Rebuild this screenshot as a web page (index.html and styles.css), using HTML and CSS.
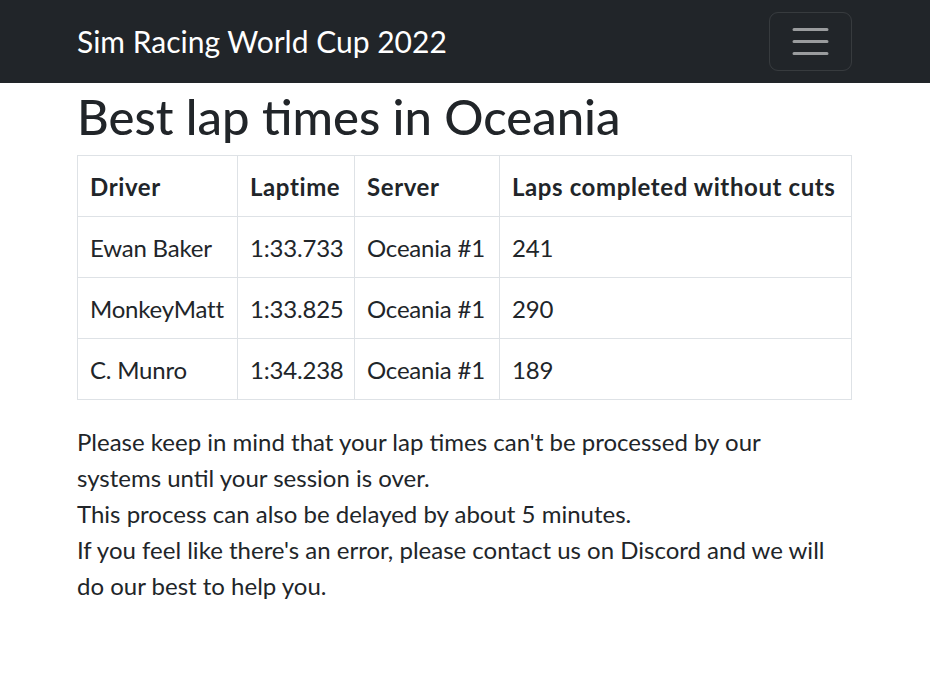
FILE: index.html
```html
<!DOCTYPE html>
<html lang="en">
<head>
<meta charset="utf-8">
<title>Sim Racing World Cup 2022</title>
<link rel="stylesheet" href="styles.css">
</head>
<body>
<nav class="navbar">
  <div class="container nav-inner">
    <a class="brand" href="#">Sim Racing World Cup 2022</a>
    <button class="toggler" type="button" aria-label="Toggle navigation">
      <svg class="toggler-icon" viewBox="0 0 30 30" width="45" height="45" aria-hidden="true">
        <path d="M4 7h22M4 15h22M4 23h22" stroke="rgba(255,255,255,0.55)" stroke-width="2" stroke-linecap="round" fill="none"/>
      </svg>
    </button>
  </div>
</nav>
<main class="container">
  <h1 class="title">Best lap times in Oceania</h1>
  <table class="laps">
    <thead>
      <tr><th class="c-driver">Driver</th><th class="c-time">Laptime</th><th class="c-server">Server</th><th>Laps completed without cuts</th></tr>
    </thead>
    <tbody>
      <tr><td>Ewan Baker</td><td>1:33.733</td><td>Oceania #1</td><td>241</td></tr>
      <tr><td>MonkeyMatt</td><td>1:33.825</td><td>Oceania #1</td><td>290</td></tr>
      <tr><td>C. Munro</td><td>1:34.238</td><td>Oceania #1</td><td>189</td></tr>
    </tbody>
  </table>
  <p class="note">Please keep in mind that your lap times can't be processed by our systems until your session is over.<br>This process can also be delayed by about 5 minutes.<br>If you feel like there's an error, please contact us on Discord and we will do our best to help you.</p>
</main>
</body>
</html>
```
FILE: styles.css
```css
* { box-sizing: border-box; }
html, body { margin: 0; padding: 0; }
body {
  font-family: Lato, "Open Sans", "Liberation Sans", sans-serif;
  font-size: 24px;
  line-height: 1.5;
  color: #212529;
  background: #fff;
}
.container {
  width: 775px;
  margin: 0 0 0 77px;
}
.navbar {
  background: #212529;
  padding: 12px 0;
}
.nav-inner {
  display: flex;
  align-items: center;
  justify-content: space-between;
}
.brand {
  color: #fff;
  text-decoration: none;
  font-size: 30px;
  line-height: 45px;
  padding: 7px 0;
}
.toggler {
  display: flex;
  align-items: center;
  justify-content: center;
  width: 83px;
  height: 59px;
  padding: 6px 18px;
  background: transparent;
  border: 1px solid rgba(255,255,255,0.1);
  border-radius: 9px;
}
.toggler-icon { display: block; width: 45px; height: 45px; }
.title {
  font-size: 49px;
  font-weight: 500;
  line-height: 60px;
  margin: 0 0 12px;
  padding-top: 3px;
  height: 60px;
}
.laps {
  width: 775px;
  table-layout: fixed;
  border-collapse: collapse;
  margin-bottom: 24px;
}
.laps th, .laps td {
  border: 1px solid #dee2e6;
  padding: 13px 12px 11px;
  text-align: left;
  line-height: 36px;
  vertical-align: top;
  white-space: nowrap;
}
.laps td { letter-spacing: -0.2px; }
.laps th { font-weight: 700; letter-spacing: 0.6px; }
.c-driver { width: 160px; }
.c-time { width: 117px; }
.c-server { width: 145px; }
.note { margin: 0 0 24px; max-width: 768px; }
```
